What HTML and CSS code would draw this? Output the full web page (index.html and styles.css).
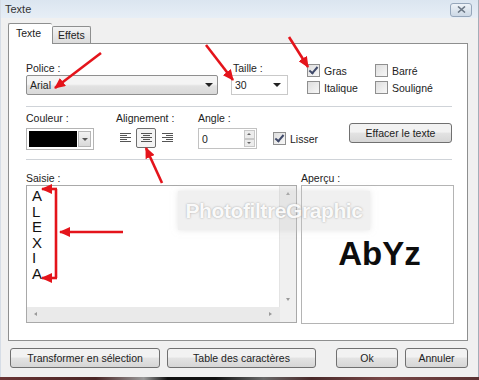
FILE: index.html
```html
<!DOCTYPE html>
<html lang="fr">
<head>
    <meta charset="UTF-8">
    <title>Texte</title>
    <link rel="stylesheet" href="styles.css">
</head>
<body>

    <div class="window">
        <!-- Title bar -->
        <div class="titlebar">
            <span class="title">Texte</span>
            <span class="close">
                <svg width="9" height="7" viewBox="0 0 9 7"><path d="M1 0.5 L8 6.5 M8 0.5 L1 6.5" stroke="#6b7785" stroke-width="1.6"/></svg>
            </span>
        </div>

        <div class="client">
            <div class="tabs">
                <div class="tab active">Texte</div>
                <div class="tab">Effets</div>
            </div>

            <div class="panel">
                <!-- Font, size, style -->
                <div class="row row-font">
                    <div class="field">
                        <div class="label">Police :</div>
                        <div class="combo combo-police"><span>Arial</span><span class="caret"></span></div>
                    </div>
                    <div class="field">
                        <div class="label">Taille :</div>
                        <div class="combo combo-size"><span>30</span><span class="caret"></span></div>
                    </div>
                    <div class="checks">
                        <div class="check"><span class="box checked"></span>Gras</div>
                        <div class="check"><span class="box"></span>Barré</div>
                        <div class="check"><span class="box"></span>Italique</div>
                        <div class="check"><span class="box"></span>Souligné</div>
                    </div>
                </div>

                <div class="sep"></div>

                <!-- Colour, alignment, angle -->
                <div class="row row-color">
                    <div class="field">
                        <div class="label">Couleur :</div>
                        <div class="color-pick">
                            <span class="swatch"></span>
                            <span class="color-btn"><span class="caret small"></span></span>
                        </div>
                    </div>
                    <div class="field">
                        <div class="label">Alignement :</div>
                        <div class="align">
                            <span class="align-btn">
                                <svg width="11" height="10" viewBox="0 0 11 10"><path d="M0 0.5H11M0 2.5H7M0 4.5H11M0 6.5H7M0 8.5H11" stroke="#555" stroke-width="1"/></svg>
                            </span>
                            <span class="align-btn pressed">
                                <svg width="11" height="10" viewBox="0 0 11 10"><path d="M0 0.5H11M2 2.5H9M0 4.5H11M2 6.5H9M0 8.5H11" stroke="#555" stroke-width="1"/></svg>
                            </span>
                            <span class="align-btn">
                                <svg width="11" height="10" viewBox="0 0 11 10"><path d="M0 0.5H11M4 2.5H11M0 4.5H11M4 6.5H11M0 8.5H11" stroke="#555" stroke-width="1"/></svg>
                            </span>
                        </div>
                    </div>
                    <div class="field">
                        <div class="label">Angle :</div>
                        <div class="spin">
                            <span>0</span>
                            <span class="spin-btns"><span class="spin-up"></span><span class="spin-down"></span></span>
                        </div>
                    </div>
                    <div class="check lisser"><span class="box checked"></span>Lisser</div>
                    <div class="btn btn-clear">Effacer le texte</div>
                </div>

                <div class="sep sep2"></div>

                <!-- Input and preview -->
                <div class="row row-text">
                    <div class="field">
                        <div class="label">Saisie :</div>
                        <div class="memo">
                            <div class="memo-text">A<br>L<br>E<br>X<br>I<br>A</div>
                            <div class="vscroll"><span class="sa up"></span><span class="sa down"></span></div>
                            <div class="hscroll"><span class="sa left"></span><span class="sa right"></span></div>
                            <div class="corner"></div>
                        </div>
                    </div>
                    <div class="field">
                        <div class="label">Aperçu :</div>
                        <div class="preview">AbYz</div>
                    </div>
                </div>
            </div>

            <div class="buttons">
                <div class="btn btn-transform">Transformer en sélection</div>
                <div class="btn btn-table">Table des caractères</div>
                <div class="btn btn-ok">Ok</div>
                <div class="btn btn-cancel">Annuler</div>
            </div>
        </div>
    </div>

    <div class="desk"></div>

    <!-- Watermark over the dialog -->
    <div class="watermark">PhotofiltreGraphic</div>

    <!-- Red annotation arrows -->
    <svg class="arrows" width="479" height="380" viewBox="0 0 479 380">
        <defs>
            <marker id="head" markerWidth="11" markerHeight="10" refX="10" refY="5" orient="auto" markerUnits="userSpaceOnUse">
                <path d="M0 0 L11 5 L0 10 Z" fill="#e4141b"/>
            </marker>
        </defs>
        <g stroke="#e4141b" stroke-width="2.6" fill="none">
            <line x1="101" y1="53" x2="55" y2="88" marker-end="url(#head)"/>
            <line x1="206" y1="45" x2="233" y2="80" marker-end="url(#head)"/>
            <line x1="289" y1="37" x2="308" y2="67" marker-end="url(#head)"/>
            <line x1="162" y1="183" x2="146" y2="148" marker-end="url(#head)"/>
            <path d="M56 189 V278"/>
            <line x1="57" y1="189" x2="42" y2="189" marker-end="url(#head)"/>
            <line x1="57" y1="278" x2="42" y2="278" marker-end="url(#head)"/>
            <line x1="123" y1="232" x2="60" y2="232" marker-end="url(#head)"/>
        </g>
    </svg>

</body>
</html>
```

FILE: styles.css
```css
body {
    margin: 0;
    width: 479px;
    height: 380px;
    overflow: hidden;
    position: relative;
    font-family: "Liberation Sans", Arial, sans-serif;
    font-size: 10.5px;
    color: #222;
    background: #3a2424;
}

.window {
    width: 479px;
    height: 377px;
    box-sizing: border-box;
    background: #f0f0f0;
    border-right: 1px solid #a4adb8;
    border-left: 1px solid #d6dde6;
}

.titlebar {
    height: 18px;
    display: flex;
    align-items: center;
    justify-content: space-between;
    padding: 0 6px 0 4px;
    background: linear-gradient(#dbe5f0, #e7eef6);
}

.title {
    color: #333;
    font-size: 11px;
}

.close {
    width: 20px;
    height: 12px;
    margin-top: 1px;
    border: 1px solid #95a6ba;
    border-radius: 3px;
    background: linear-gradient(#eef3f8, #ccd8e5);
    display: flex;
    align-items: center;
    justify-content: center;
}

.client {
    padding: 6px 10px 0 7px;
}

/* Tabs */
.tabs {
    display: flex;
    align-items: flex-end;
    height: 19px;
}

.tab {
    height: 16px;
    padding: 0 5px;
    line-height: 16px;
    border: 1px solid #8e8f8f;
    border-bottom: none;
    background: linear-gradient(#f4f4f4, #dcdcdc);
    border-radius: 2px 2px 0 0;
}

.tab.active {
    line-height: 18px;
    padding: 0 11px 0 7px;
    background: #fff;
    position: relative;
    z-index: 1;
    margin-bottom: -1px;
    height: 20px;
    border-right: none;
}

.panel {
    height: 298px;
    box-sizing: border-box;
    border: 1px solid #8e8f8f;
    background: #fff;
    padding: 18px 15px 0 17px;
}

.row {
    display: flex;
}

.label {
    line-height: 13px;
    height: 13px;
}

/* Row 1 */
.combo {
    height: 20px;
    box-sizing: border-box;
    display: flex;
    align-items: center;
    justify-content: space-between;
    padding: 0 4px 0 3px;
}

.combo-police {
    width: 192px;
    border: 1px solid #8f8f8f;
    border-radius: 2px;
    background: linear-gradient(#f4f4f4 45%, #e2e2e2 55%, #d9d9d9);
}

.combo-size {
    width: 57px;
    margin-left: 13px;
    border: 1px solid #c9c9c9;
    background: #fff;
    padding-right: 6px;
}

.row-font .field + .field .label {
    margin-left: 15px;
}

.caret {
    width: 0;
    height: 0;
    border-left: 4px solid transparent;
    border-right: 4px solid transparent;
    border-top: 4px solid #222;
}

.caret.small {
    border-left-width: 3px;
    border-right-width: 3px;
    border-top: 3px solid #555;
}

.checks {
    display: grid;
    grid-template-columns: 68px auto;
    row-gap: 3px;
    margin-left: 19px;
    margin-top: 2px;
}

.check {
    display: flex;
    align-items: center;
    height: 13px;
}

.box {
    width: 11px;
    height: 11px;
    margin-right: 4px;
    border: 1px solid #8f8f8f;
    background: linear-gradient(135deg, #dedede, #f7f7f7);
    position: relative;
}

.box.checked::after {
    content: "";
    position: absolute;
    left: 3px;
    top: 0px;
    width: 3px;
    height: 7px;
    border-right: 2px solid #404a6a;
    border-bottom: 2px solid #404a6a;
    transform: rotate(40deg);
}

.sep {
    height: 1px;
    background: #cfd3d8;
    margin: 11px 0 0 0;
}

/* Row 2 */
.row-color {
    margin-top: 5px;
    align-items: flex-start;
}

.row-color .label {
    margin-bottom: 3px;
}

.color-pick {
    display: flex;
    width: 68px;
    height: 22px;
    box-sizing: border-box;
    border: 1px solid #b4b4b4;
    padding: 2px;
    background: #fff;
}

.swatch {
    flex: 1;
    background: #000;
}

.color-btn {
    width: 11px;
    margin-left: 1px;
    border: 1px solid #b6b6b6;
    background: linear-gradient(#f2f2f2, #dadada);
    display: flex;
    align-items: center;
    justify-content: center;
}

.row-color .field:nth-child(2) {
    margin-left: 22px;
}

.align {
    display: flex;
    align-items: center;
    margin-top: 1px;
    margin-left: -1px;
}

.align-btn {
    width: 20px;
    height: 20px;
    box-sizing: border-box;
    display: flex;
    align-items: center;
    justify-content: center;
}

.align-btn.pressed {
    border: 1px solid #6e6e6e;
    border-radius: 2px;
    background: #f4f4f4;
    margin: 0 1px;
}

.row-color .field:nth-child(3) {
    margin-left: 21px;
}

.spin {
    width: 59px;
    height: 21px;
    box-sizing: border-box;
    border: 1px solid #c2c2c2;
    display: flex;
    justify-content: space-between;
    align-items: center;
    padding-left: 3px;
}

.spin-btns {
    width: 11px;
    height: 17px;
    display: flex;
    flex-direction: column;
    margin-right: 1px;
}

.spin-btns span {
    flex: 1;
    border: 1px solid #c8c8c8;
    background: #ececec;
    position: relative;
}

.spin-up::after,
.spin-down::after {
    content: "";
    position: absolute;
    left: 2px;
    top: 2px;
    border-left: 2px solid transparent;
    border-right: 2px solid transparent;
}

.spin-up::after {
    border-bottom: 2px solid #666;
}

.spin-down::after {
    border-top: 2px solid #666;
}

.lisser {
    margin-left: 16px;
    margin-top: 20px;
}

.btn {
    height: 20px;
    box-sizing: border-box;
    border: 1px solid #707070;
    border-radius: 3px;
    background: linear-gradient(#f2f2f2 45%, #e3e3e3 50%, #d6d6d6);
    display: flex;
    align-items: center;
    justify-content: center;
}

.btn-clear {
    width: 103px;
    margin-left: auto;
    margin-top: 11px;
}

.sep2 {
    margin-top: 9px;
}

/* Row 3 */
.row-text {
    margin-top: 12px;
}

.memo {
    width: 271px;
    height: 138px;
    box-sizing: border-box;
    border: 1px solid #a9a9a9;
    position: relative;
    background: #fff;
}

.memo-text {
    font-size: 15px;
    line-height: 15.6px;
    padding: 2px 0 0 5px;
    color: #111;
}

.vscroll {
    position: absolute;
    right: 0;
    top: 0;
    bottom: 15px;
    width: 16px;
    background: #f0f0f0;
    border-left: 1px solid #e4e4e4;
}

.hscroll {
    position: absolute;
    left: 0;
    right: 16px;
    bottom: 0;
    height: 15px;
    background: #eaeaea;
}

.corner {
    position: absolute;
    right: 0;
    bottom: 0;
    width: 16px;
    height: 15px;
    background: #f0f0f0;
}

.sa {
    position: absolute;
    width: 0;
    height: 0;
}

.sa.up {
    left: 6px;
    top: 6px;
    border-left: 2px solid transparent;
    border-right: 2px solid transparent;
    border-bottom: 3px solid #999;
}

.sa.down {
    left: 6px;
    bottom: 6px;
    border-left: 2px solid transparent;
    border-right: 2px solid transparent;
    border-top: 3px solid #999;
}

.sa.left {
    left: 7px;
    top: 5px;
    border-top: 2px solid transparent;
    border-bottom: 2px solid transparent;
    border-right: 3px solid #999;
}

.sa.right {
    right: 8px;
    top: 5px;
    border-top: 2px solid transparent;
    border-bottom: 2px solid transparent;
    border-left: 3px solid #999;
}

.row-text .field + .field {
    margin-left: 4px;
}

.preview {
    width: 153px;
    height: 139px;
    box-sizing: border-box;
    border: 1px solid #b4b4b4;
    display: flex;
    align-items: center;
    justify-content: center;
    font-weight: bold;
    font-size: 33px;
    color: #0d0d0d;
    padding: 0 0 2px 4px;
}

/* Bottom buttons */
.buttons {
    display: flex;
    margin-top: 7px;
    padding-left: 2px;
}

.btn-transform {
    width: 150px;
}

.btn-table {
    width: 149px;
    margin-left: 7px;
}

.btn-ok {
    width: 62px;
    margin-left: auto;
}

.btn-cancel {
    width: 63px;
    margin-left: 7px;
}

.desk {
    height: 3px;
    background: linear-gradient(90deg, #6a3434, #4a2626 20%, #9a9a9a 30%, #111 35%, #111 45%, #6a6a6a 55%, #4a2a2a 65%, #7a4848 80%, #5a3232);
}

/* Overlays */
.watermark {
    position: absolute;
    left: 178px;
    top: 191px;
    width: 192px;
    height: 39px;
    background: rgba(205, 205, 205, 0.3);
    box-shadow: 0 0 6px rgba(205, 205, 205, 0.55);
    display: flex;
    align-items: center;
    justify-content: center;
    font-weight: bold;
    font-size: 21px;
    letter-spacing: -0.4px;
    color: rgba(255, 255, 255, 0.95);
    text-shadow: 0 0 2px rgba(110, 110, 110, 0.6);
}

.arrows {
    position: absolute;
    left: 0;
    top: 0;
}
```
